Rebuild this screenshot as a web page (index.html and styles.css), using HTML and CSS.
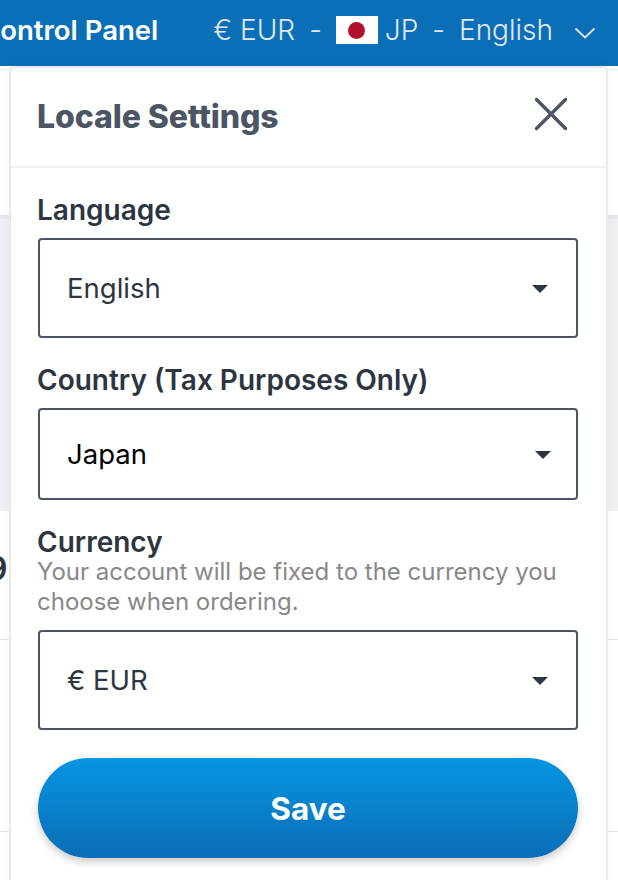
FILE: index.html
```html
<!DOCTYPE html>
<html lang="en">
<head>
<meta charset="utf-8">
<title>Locale Settings</title>
<link rel="stylesheet" href="styles.css">
</head>
<body>
<header class="topbar">
  <span class="brand">Control Panel</span>
  <div class="locale">
    <span>€ EUR</span><span class="sep">-</span>
    <span class="flag"><span class="sun"></span></span><span>JP</span><span class="sep">-</span>
    <span>English</span>
    <svg class="chev" width="24" height="14" viewBox="0 0 24 14"><path d="M2.5 2.5 L12 11.5 L21.5 2.5" fill="none" stroke="currentColor" stroke-width="1.8"/></svg>
  </div>
</header>
<div class="page">
  <div class="backdrop">
    <div class="band band-a"></div>
    <div class="band band-b"><span class="cut">9</span></div>
    <div class="band band-c"></div>
  </div>
  <section class="panel">
    <div class="panel-head">
      <h2>Locale Settings</h2>
      <svg class="close" width="34" height="34" viewBox="0 0 34 34"><path d="M2.5 2.5 L31.5 31.5 M31.5 2.5 L2.5 31.5" fill="none" stroke="#4b5563" stroke-width="3.4" stroke-linecap="round"/></svg>
    </div>
    <form class="panel-body">
      <div class="field">
        <label>Language</label>
        <div class="select tall"><span>English</span><i class="caret"></i></div>
      </div>
      <div class="field">
        <label>Country (Tax Purposes Only)</label>
        <div class="select short black"><span>Japan</span><i class="caret"></i></div>
      </div>
      <div class="field currency">
        <label>Currency</label>
        <p class="hint">Your account will be fixed to the currency you choose when ordering.</p>
        <div class="select tall"><span>€ EUR</span><i class="caret"></i></div>
      </div>
      <button class="save" type="button">Save</button>
    </form>
  </section>
</div>
</body>
</html>
```
FILE: styles.css
```css
* { box-sizing: border-box; }
html, body { margin: 0; height: 100%; overflow: hidden; }
body { font-family: Inter, "Liberation Sans", sans-serif; background: #fff; color: #2d3540; }
.topbar { height: 66px; background: #0b6fb8; display: flex; align-items: center; justify-content: space-between; padding: 0 21px 6px 0; color: #fff; overflow: hidden; }
.brand { font-weight: 600; margin-left: -20px; font-size: 27.5px; white-space: nowrap; }
.locale { display: flex; align-items: center; color: #e2e8f0; font-size: 28px; font-weight: 300; white-space: nowrap; }
.sep { margin: 0 14px; }
.flag { width: 42px; height: 28px; background: #fff; display: flex; align-items: center; justify-content: center; margin-right: 7px; }
.sun { width: 17px; height: 17px; border-radius: 50%; background: #b0102e; }
.chev { margin-left: 20px; margin-top: 6px; }
.page { position: relative; height: 814px; }
.backdrop { position: absolute; inset: 0; background: #fff; }
.band { position: absolute; left: 0; right: 0; }
.band-a { top: 148px; height: 296px; background: #eef0f4; border-top: 4px solid #e4e7ec; }
.band-b { top: 444px; height: 129px; border-bottom: 1px solid #e5e7eb; font-size: 32px; font-weight: 600; }
.band-c { top: 764px; height: 1px; background: #e5e7eb; }
.cut { position: absolute; left: -13px; top: 38px; }
.panel { position: relative; margin: 1px 11px 0 10px; height: 830px; background: #fff; border: 1px solid #e5e7eb; border-radius: 4px; box-shadow: 0 0 0 1px #e9ecf1, 0 0 10px 2px rgba(0,0,0,.04); }
.panel-head { height: 100px; border-bottom: 2px solid #eff1f5; display: flex; align-items: center; justify-content: space-between; padding: 0 38px 0 26px; }
h2 { margin: -2px 0 0; font-size: 32px; font-weight: 800; color: #4b5563; letter-spacing: -0.1px; }
.close { margin-top: -6px; }
.panel-body { padding: 26px 28px 0 27px; }
label { display: block; margin-left: -1px; font-size: 28px; font-weight: 600; color: #2d3540; line-height: 32px; }
.field { margin-bottom: 26px; }
.select { margin-top: 12px; border: 2px solid #4b5563; border-radius: 4px; display: flex; align-items: center; justify-content: space-between; padding: 0 28px 0 27px; font-size: 27.5px; color: #2d3540; }
.tall { height: 100px; }
.short { height: 92px; }
.black { color: #000; padding-right: 25px; }
.caret { width: 0; height: 0; margin-top: 2px; border-left: 8px solid transparent; border-right: 8px solid transparent; border-top: 8px solid #2d3540; }
.hint { margin: 0 0 0 -1px; font-size: 24px; line-height: 30px; color: #888; }
.currency { margin-bottom: 28px; padding-top: 1px; }
.currency label { line-height: 30px; }
.currency .select { margin-top: 13px; }
.save { display: block; width: 100%; height: 100px; border: 0; border-radius: 50px; background: linear-gradient(#0695e2, #0b6db5); color: #fff; font: 700 31.5px Inter, "Liberation Sans", sans-serif; box-shadow: 0 4px 8px rgba(0,0,0,.2); }
```
